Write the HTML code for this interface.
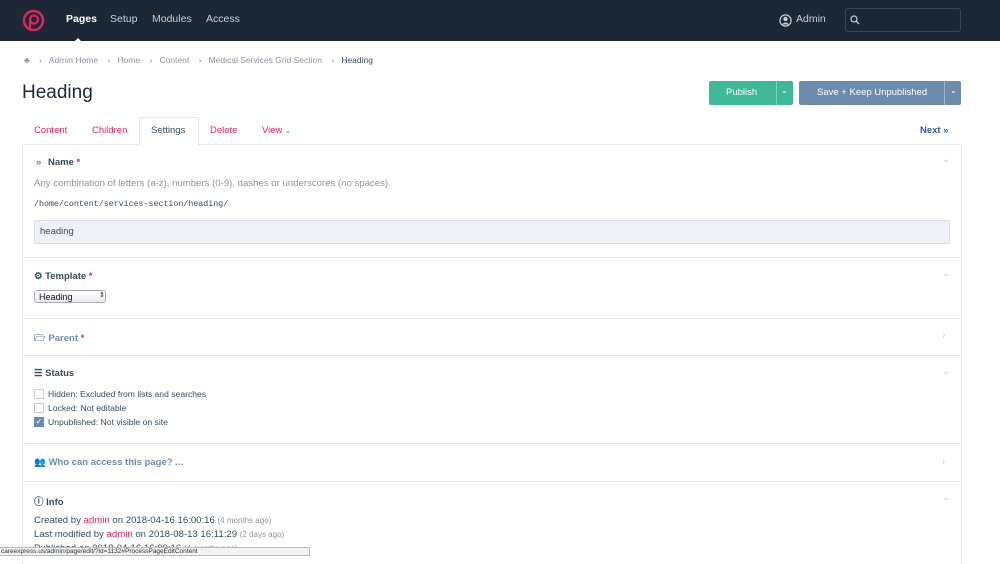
<!DOCTYPE html><html><head><style>
*{margin:0;padding:0;box-sizing:border-box}
body{width:1000px;height:556px;overflow:hidden;background:#fff;font-family:"Liberation Sans",sans-serif;position:relative;color:#354b60}
.a{position:absolute;white-space:nowrap}
.nav{position:absolute;left:0;top:0;width:1000px;height:41px;background:#1c2836}
.nav .l{position:absolute;top:13px;font-size:10.5px;color:#c8cfd8}
.bc{font-size:8.5px;color:#8d939e;top:55px}
.tab{font-size:9.5px;color:#e0245e;top:125px}
.panel{position:absolute;left:22px;top:144px;width:940px;height:420px;border:1px solid #e5e9ee;border-bottom:none}
.sep{position:absolute;left:23px;width:938px;height:1px;background:#e5e9ee}
.h{font-size:9.5px;font-weight:bold;color:#354b60}
.req{color:#e0245e}
.chev{position:absolute;left:942px;font-size:10px;color:#c6ccd3}
.cb{position:absolute;left:34px;width:10px;height:10px;border:1px solid #c9cfd6;background:#fff}
.t8{font-size:8.6px;color:#354b60}
</style></head><body>
<div class="nav">
<svg class="a" style="left:22px;top:9px" width="23" height="23" viewBox="0 0 23 23"><circle cx="11.5" cy="11.5" r="9.5" fill="none" stroke="#e0245e" stroke-width="2.5"/><circle cx="12" cy="10.5" r="4" fill="none" stroke="#e0245e" stroke-width="2.3"/><path d="M8 10.5V20" stroke="#e0245e" stroke-width="2.3"/></svg>
<span class="l" style="left:66px;color:#fff;font-weight:bold">Pages</span>
<span class="l" style="left:110px">Setup</span>
<span class="l" style="left:152px">Modules</span>
<span class="l" style="left:206px">Access</span>
<div class="a" style="left:75px;top:38px;width:0;height:0;border-left:3px solid transparent;border-right:3px solid transparent;border-bottom:3px solid #fff"></div>
<svg class="a" style="left:779px;top:14px" width="13" height="13" viewBox="0 0 13 13"><circle cx="6.5" cy="6.5" r="5.6" fill="none" stroke="#c8cfd8" stroke-width="1.2"/><circle cx="6.5" cy="5" r="2.2" fill="#c8cfd8"/><path d="M2.8 10.5Q6.5 6.5 10.2 10.5" fill="#c8cfd8"/></svg>
<span class="l" style="left:796px">Admin</span>
<div class="a" style="left:845px;top:8px;width:116px;height:24px;border:1px solid #34445a;border-radius:3px"></div>
<svg class="a" style="left:850px;top:15px" width="10" height="10" viewBox="0 0 10 10"><circle cx="4" cy="4" r="3" fill="none" stroke="#c8cfd8" stroke-width="1.2"/><path d="M6.2 6.2L9 9" stroke="#c8cfd8" stroke-width="1.3"/></svg>
</div>
<span class="a bc" style="left:24px">♣</span>
<span class="a bc" style="left:39px">›&nbsp;&nbsp;&nbsp;Admin Home&nbsp;&nbsp;&nbsp;&nbsp;›&nbsp;&nbsp;&nbsp;Home&nbsp;&nbsp;&nbsp;&nbsp;›&nbsp;&nbsp;&nbsp;Content&nbsp;&nbsp;&nbsp;&nbsp;›&nbsp;&nbsp;&nbsp;Medical Services Grid Section&nbsp;&nbsp;&nbsp;&nbsp;›&nbsp;&nbsp;&nbsp;<span style="color:#354b60">Heading</span></span>
<span class="a" style="left:22px;top:82px;font-size:19px;color:#1c2836">Heading</span>
<div class="a" style="left:709px;top:81px;width:84px;height:24px;background:#3eb998;border-radius:2px"></div>
<div class="a" style="left:776px;top:81px;width:1px;height:24px;background:#7fd3bb"></div>
<span class="a" style="left:726px;top:87px;font-size:9.5px;color:#fff">Publish</span>
<span class="a" style="left:781px;top:86px;font-size:8px;color:#fff">⌄</span>
<div class="a" style="left:799px;top:81px;width:162px;height:24px;background:#6c8cad;border-radius:2px"></div>
<div class="a" style="left:944px;top:81px;width:1px;height:24px;background:#9fb3c9"></div>
<span class="a" style="left:817px;top:87px;font-size:9.5px;color:#fff">Save + Keep Unpublished</span>
<span class="a" style="left:950px;top:86px;font-size:8px;color:#fff">⌄</span>
<span class="a tab" style="left:34px">Content</span>
<span class="a tab" style="left:92px">Children</span>
<div class="a" style="left:139px;top:117px;width:60px;height:29px;border:1px solid #e5e9ee;border-bottom:1px solid #fff;background:#fff;z-index:2"></div>
<span class="a tab" style="left:151px;color:#354b60;z-index:3">Settings</span>
<span class="a tab" style="left:210px">Delete</span>
<span class="a tab" style="left:262px">View <span style="font-size:7px">⌄</span></span>
<span class="a" style="left:920px;top:125px;font-size:9.5px;font-weight:bold;color:#2d59a8">Next »</span>
<div class="panel"></div>
<span class="a h" style="left:36px;top:157px;font-weight:normal">»</span>
<span class="a h" style="left:48px;top:157px">Name <span class="req">*</span></span>
<span class="chev" style="top:154px">⌄</span>
<span class="a" style="left:34px;top:178px;font-size:9.6px;color:#8d939e">Any combination of letters (a-z), numbers (0-9), dashes or underscores (no spaces).</span>
<span class="a" style="left:34px;top:200px;font-family:'Liberation Mono',monospace;font-size:8.3px;color:#354b60">/home/content/services-section/heading/</span>
<div class="a" style="left:34px;top:220px;width:916px;height:24px;background:#eef2f7;border:1px solid #d6dde5"></div>
<span class="a" style="left:40px;top:226px;font-size:9.5px;color:#354b60">heading</span>
<div class="sep" style="top:257px"></div>
<span class="a h" style="left:34px;top:271px">⚙ Template <span class="req">*</span></span>
<span class="chev" style="top:268px">⌄</span>
<div class="a" style="left:34px;top:290px;width:72px;height:13px;border:1px solid #a9adb3;border-radius:3px;background:linear-gradient(#fff,#ececec)"></div>
<span class="a" style="left:39px;top:292px;font-size:9px;color:#111">Heading</span>
<span class="a" style="left:99px;top:291px;font-size:7px;color:#222">⇕</span>
<div class="sep" style="top:318px"></div>
<span class="a h" style="left:34px;top:331px;color:#6c8cad">🗁 Parent <span class="req">*</span></span>
<span class="chev" style="top:330px">›</span>
<div class="sep" style="top:355px"></div>
<span class="a h" style="left:34px;top:368px">☰ Status</span>
<span class="chev" style="top:366px">⌄</span>
<div class="cb" style="top:389px"></div><span class="a t8" style="left:48px;top:389px">Hidden: Excluded from lists and searches</span>
<div class="cb" style="top:403px"></div><span class="a t8" style="left:48px;top:403px">Locked: Not editable</span>
<div class="cb" style="top:417px;background:#6c8cad;border-color:#6c8cad;color:#fff;font-size:8px;line-height:8px;text-align:center">✓</div><span class="a t8" style="left:48px;top:417px">Unpublished: Not visible on site</span>
<div class="sep" style="top:443px"></div>
<span class="a h" style="left:34px;top:457px;color:#6c8cad">👥 Who can access this page? ...</span>
<span class="chev" style="top:456px">›</span>
<div class="sep" style="top:481px"></div>
<span class="a h" style="left:34px;top:494px">ⓘ Info</span>
<span class="chev" style="top:492px">⌄</span>
<span class="a" style="left:34px;top:515px;font-size:9.6px">Created by <span class="req">admin</span> on 2018-04-16 16:00:16 <span style="font-size:8px;color:#8d939e">(4 months ago)</span></span>
<span class="a" style="left:34px;top:529px;font-size:9.6px">Last modified by <span class="req">admin</span> on 2018-08-13 16:11:29 <span style="font-size:8px;color:#8d939e">(2 days ago)</span></span>
<span class="a" style="left:34px;top:543px;font-size:9.6px">Published on 2018-04-16 16:00:16 <span style="font-size:8px;color:#8d939e">(4 months ago)</span></span>
<div class="a" style="left:0;top:547px;width:310px;height:9px;background:#f2f2f2;border:1px solid #bbb;border-left:none;font-size:6.5px;color:#333;padding-left:1px;line-height:8px">careexpress.us/admin/page/edit/?id=1132#ProcessPageEditContent</div>
</body></html>
